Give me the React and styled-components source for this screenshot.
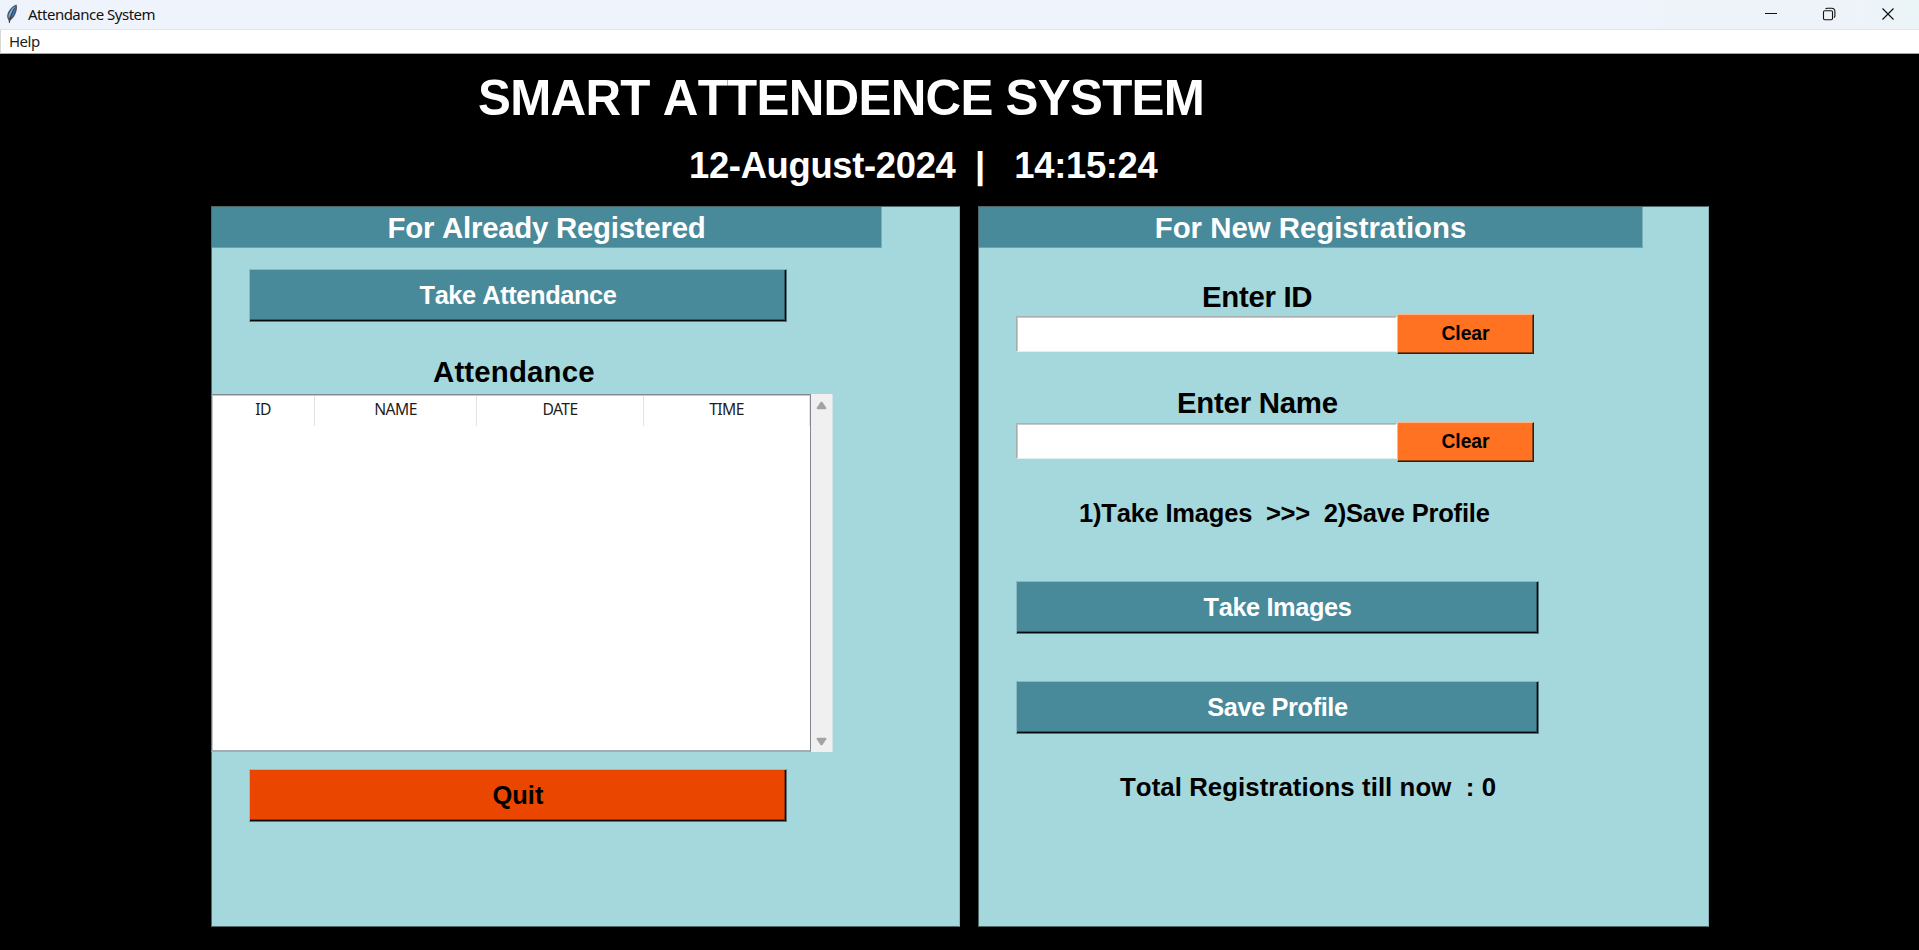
import React from "react";
import styled, { createGlobalStyle } from "styled-components";

const GlobalStyle = createGlobalStyle`
  *, *::before, *::after { box-sizing: border-box; }
  html, body { margin: 0; padding: 0; background: #000; overflow: hidden; }
  button, input { font: inherit; margin: 0; border-radius: 0; outline: none; }
`;

const Window = styled.div`
  display: flex;
  flex-direction: column;
  width: 1919px;
  height: 950px;
  overflow: hidden;
  background: #000;
  font-family: "Liberation Sans", Arial, sans-serif;
  font-kerning: none;
  font-variant-ligatures: none;
`;

const TitleBar = styled.header`
  display: flex;
  align-items: center;
  height: 30px;
  padding: 0 19px 2px 6px;
  background: linear-gradient(90deg, #eff3fb 0%, #eff3fb 86%, #edf3f8 88%, #eef3fa 91%, #eef3f9 96%, #ebf4f7 100%);
  border-bottom: 1px solid #e2e4e8;
`;

const WindowTitle = styled.span`
  margin-left: 10px;
  font: 15px/22px "Noto Sans", sans-serif;
  letter-spacing: -0.5px;
  color: #111;
`;

const WindowControls = styled.div`
  display: flex;
  gap: 34px;
  margin-left: auto;

  svg { display: block; width: 24px; height: 24px; }
`;

const MenuBar = styled.nav`
  display: flex;
  align-items: center;
  height: 24px;
  padding: 0 0 2px 8px;
  background: #fff;
  border-left: 1px solid #d8d8d8;
  border-bottom: 1px solid #a5a5a5;
`;

const MenuItem = styled.span`
  font: 15px/20px "Noto Sans", sans-serif;
  letter-spacing: -0.5px;
  color: #1c1c1c;
`;

const Banner = styled.h1`
  height: 60px;
  margin: 14px 0 0 478px;
  font-size: 49.3px;
  line-height: 60px;
  font-weight: 700;
  letter-spacing: -0.7px;
  color: #fff;
  white-space: pre;
`;

const Clock = styled.div`
  height: 44px;
  margin: 16px 0 18px 689px;
  font-size: 36.4px;
  line-height: 44px;
  font-weight: 700;
  letter-spacing: -0.32px;
  color: #fff;
  white-space: pre;
`;

const Panels = styled.main`
  display: flex;
  gap: 18px;
  padding-left: 211px;
`;

const Panel = styled.section`
  display: flex;
  flex-direction: column;
  align-items: flex-start;
  width: ${(p) => p.$width}px;
  height: 721px;
  background: #a5d8dc;
  border: 1px solid #4d6769;
  border-right-color: #8ab5b8;
`;

const PanelHeader = styled.h2`
  width: ${(p) => p.$width}px;
  height: 41px;
  margin: 0;
  padding-top: 1px;
  font-size: 29.4px;
  line-height: 40px;
  font-weight: 700;
  letter-spacing: ${(p) => p.$spacing || 0}px;
  text-align: center;
  color: #fff;
  background: #48899a;
  border-right: 1px solid #79b1bb;
  border-bottom: 1px solid #6da3af;
`;

const Label = styled.div`
  height: 36px;
  margin: ${(p) => p.$top}px 0 0 ${(p) => p.$left}px;
  font-size: ${(p) => p.$size || 29.4}px;
  line-height: 37px;
  font-weight: 700;
  letter-spacing: ${(p) => p.$spacing || 0}px;
  color: #000;
  white-space: pre;
`;

const tones = {
  teal: { face: "#48899a", light: "#8ab9c4", shade: "#2d5964", text: "#fff" },
  red: { face: "#eb4600", light: "#f39a78", shade: "#9b2f02", text: "#000" },
  orange: { face: "#ff7221", light: "#ffb48a", shade: "#a64c18", text: "#000" },
};

const RaisedButton = styled.button`
  flex: none;
  width: ${(p) => p.$width}px;
  height: 53px;
  margin: ${(p) => p.$top}px 0 0 37px;
  padding: 0;
  font-size: 25.4px;
  line-height: 51px;
  font-weight: 700;
  letter-spacing: ${(p) => (p.$spacing === undefined ? -0.42 : p.$spacing)}px;
  color: ${(p) => tones[p.$tone].text};
  background: ${(p) => tones[p.$tone].face};
  border: 1px solid;
  border-color: ${(p) => tones[p.$tone].light} #55777a #55777a ${(p) => tones[p.$tone].light};
  box-shadow: inset -1px -1px 0 #05090a, inset -2px -2px 0 ${(p) => tones[p.$tone].shade};
`;

const ClearButton = styled(RaisedButton)`
  width: 137px;
  height: 40px;
  margin: 0;
  font-size: 19.3px;
  line-height: 36px;
  letter-spacing: -0.05px;
  border-color: #ffb48a #1d2627 #1d2627 #ffb48a;
  box-shadow: inset -1px -1px 0 #8a4014;
`;

const FieldRow = styled.div`
  display: flex;
  align-items: flex-start;
  height: 40px;
  margin: ${(p) => p.$top}px 0 0 37px;
`;

const Entry = styled.input`
  width: 381px;
  height: 36px;
  margin-top: ${(p) => p.$drop}px;
  padding: 0 4px;
  background: #fff;
  border: 1px solid;
  border-color: #a9b0b2 #fff #dff0f2 #a3aeb0;
  box-shadow: inset 1px 1px 0 #c9c9c9;
`;

const TableArea = styled.div`
  display: flex;
  width: 622px;
  height: 358px;
  margin: 5px 0 0 -1px;
`;

const Table = styled.div`
  width: 600px;
  height: 358px;
  background: #fff;
  border: 1px solid #828790;
  border-bottom: 2px solid #a3adb3;
  border-left-color: #6c7478;
  box-shadow: inset 1px 1px 0 #c6cacd;
`;

const TableHead = styled.div`
  display: grid;
  grid-template-columns: 103px 162px 167px 166px;
  height: 31px;
  padding-top: 1px;
`;

const HeadCell = styled.div`
  font: 15.7px/27px "Noto Sans", sans-serif;
  letter-spacing: -0.6px;
  text-align: center;
  color: #1d1d1d;
  border-right: 1px solid #e3e3e3;
`;

const ScrollBar = styled.div`
  display: flex;
  flex-direction: column;
  justify-content: space-between;
  align-items: center;
  width: 22px;
  padding: 7px 0 6px 0;
  background: #f0f0f0;
  border-right: 1px solid #cfe4e6;

  svg { display: block; width: 11px; height: 9px; fill: #a3a3a3; }
`;

const Feather = () => (
  <svg width="12" height="20" viewBox="0 0 12 20">
    <path d="M10.4 0.5C7.4 1.2 3.1 5.4 1.6 9.6C0.9 11.8 1 14 2.2 15.6L3.4 19.4L4.4 16.2C8.2 13.8 10.8 8.4 11 3.4C11 2.2 10.8 1.2 10.4 0.5Z" fill="#4b5964" />
    <path d="M9.6 2C7.2 3.2 4.2 6.4 3 10C2.4 11.8 2.5 13 3 14.2C5.6 9.6 6.8 6.4 9.6 2Z" fill="#79aee2" />
    <path d="M9.8 2.6C7.6 6.8 6.2 10.2 4.2 14.2C7.2 12 9.6 7.6 9.8 2.6Z" fill="#3f7ac4" />
    <path d="M8.4 4.4C6.2 8 4.2 12.4 3.3 19" fill="none" stroke="#1c242c" strokeWidth="0.6" />
  </svg>
);

const Controls = () => (
  <WindowControls>
    <svg viewBox="0 0 24 24" fill="none" stroke="#111" strokeWidth="1">
      <path d="M5 11.5H17" />
    </svg>
    <svg viewBox="0 0 24 24" fill="none" stroke="#111" strokeWidth="1.1">
      <rect x="5.5" y="8.7" width="9" height="9" rx="1.2" />
      <path d="M7.6 6.9Q8 6.3 9.2 6.3H13.6Q16.9 6.3 16.9 9.6V13.8Q16.9 15.1 15.9 15.6" />
    </svg>
    <svg viewBox="0 0 24 24" fill="none" stroke="#111" strokeWidth="1.2">
      <path d="M6.5 6.5L17.5 17.5M17.5 6.5L6.5 17.5" />
    </svg>
  </WindowControls>
);

export default function App() {
  return (
    <>
      <GlobalStyle />
      <Window>
        <TitleBar>
          <Feather />
          <WindowTitle>Attendance System</WindowTitle>
          <Controls />
        </TitleBar>
        <MenuBar>
          <MenuItem>Help</MenuItem>
        </MenuBar>

        <Banner>SMART ATTENDENCE SYSTEM</Banner>
        <Clock>{"12-August-2024  |   14:15:24"}</Clock>

        <Panels>
          <Panel $width={749}>
            <PanelHeader $width={670} $spacing={-0.25}>For Already Registered</PanelHeader>
            <RaisedButton $tone="teal" $width={538} $top={21}>Take Attendance</RaisedButton>
            <Label $top={31} $left={221} $spacing={0.17}>Attendance</Label>
            <TableArea>
              <Table>
                <TableHead>
                  {["ID", "NAME", "DATE", "TIME"].map((name) => (
                    <HeadCell key={name}>{name}</HeadCell>
                  ))}
                </TableHead>
              </Table>
              <ScrollBar>
                <svg viewBox="0 0 12 9"><path d="M5 0.8Q6 -0.2 7 0.8L11.2 7Q11.6 8.6 10.4 8.6H1.6Q0.4 8.6 0.8 7Z" /></svg>
                <svg viewBox="0 0 12 9"><path d="M5 8.2Q6 9.2 7 8.2L11.2 2Q11.6 0.4 10.4 0.4H1.6Q0.4 0.4 0.8 2Z" /></svg>
              </ScrollBar>
            </TableArea>
            <RaisedButton $tone="red" $width={538} $top={17} $spacing={0.1}>Quit</RaisedButton>
          </Panel>

          <Panel $width={731}>
            <PanelHeader $width={664} $spacing={-0.02}>For New Registrations</PanelHeader>
            <Label $top={30} $left={223} $spacing={-0.3}>Enter ID</Label>
            <FieldRow $top={0}>
              <Entry $drop={2} aria-label="Enter ID" />
              <ClearButton $tone="orange">Clear</ClearButton>
            </FieldRow>
            <Label $top={30} $left={198} $spacing={-0.25}>Enter Name</Label>
            <FieldRow $top={2}>
              <Entry $drop={1} aria-label="Enter Name" />
              <ClearButton $tone="orange">Clear</ClearButton>
            </FieldRow>
            <Label $top={33} $left={100} $size={25.5} $spacing={-0.2}>{"1)Take Images  >>>  2)Save Profile"}</Label>
            <RaisedButton $tone="teal" $width={523} $top={50}>Take Images</RaisedButton>
            <RaisedButton $tone="teal" $width={523} $top={47}>Save Profile</RaisedButton>
            <Label $top={35} $left={141} $size={25.8} $spacing={0.06}>{"Total Registrations till now  : 0"}</Label>
          </Panel>
        </Panels>
      </Window>
    </>
  );
}
